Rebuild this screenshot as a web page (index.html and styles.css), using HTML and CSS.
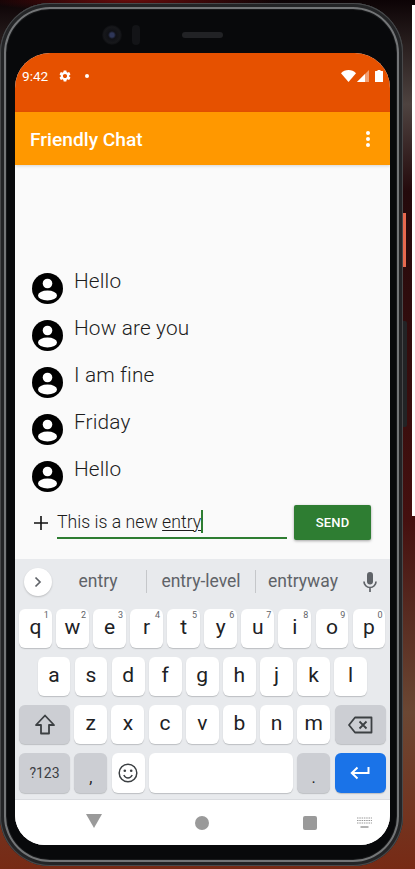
FILE: index.html
```html
<!DOCTYPE html>
<html lang="en">
<head>
  <meta charset="UTF-8">
  <title>Friendly Chat</title>
  <link rel="stylesheet" href="styles.css">
</head>
<body>

  <div class="window-edge"></div>

  <div class="phone">
    <span class="side-glow"></span>
    <span class="side-button"></span>

    <div class="bezel-top">
      <span class="camera"></span>
      <span class="sensor"></span>
      <span class="speaker"></span>
    </div>

    <div class="screen">
      <div class="status-bar">
        <span class="clock">9:42</span>
        <svg class="gear" viewBox="0 0 24 24"><path fill="#fff" d="M19.14 12.94c.04-.3.06-.61.06-.94 0-.32-.02-.64-.07-.94l2.03-1.58c.18-.14.23-.41.12-.61l-1.92-3.32c-.12-.22-.37-.29-.59-.22l-2.39.96c-.5-.38-1.03-.7-1.62-.94l-.36-2.54c-.04-.24-.24-.41-.48-.41h-3.84c-.24 0-.43.17-.47.41l-.36 2.54c-.59.24-1.13.57-1.62.94l-2.39-.96c-.22-.08-.47 0-.59.22L2.74 8.87c-.12.21-.08.47.12.61l2.03 1.58c-.05.3-.09.63-.09.94s.02.64.07.94l-2.03 1.58c-.18.14-.23.41-.12.61l1.92 3.32c.12.22.37.29.59.22l2.39-.96c.5.38 1.03.7 1.62.94l.36 2.54c.05.24.24.41.48.41h3.84c.24 0 .44-.17.47-.41l.36-2.54c.59-.24 1.13-.56 1.62-.94l2.39.96c.22.08.47 0 .59-.22l1.92-3.32c.12-.22.07-.47-.12-.61l-2.01-1.58zM12 15.6c-1.98 0-3.6-1.62-3.6-3.6s1.62-3.6 3.6-3.6 3.6 1.62 3.6 3.6-1.62 3.6-3.6 3.6z"/></svg>
        <span class="dot"></span>
        <span class="status-icons">
          <svg width="15" height="12" viewBox="0 0 15 12"><path fill="#fff" d="M0 3.2C2 1.2 4.6 0 7.5 0S13 1.200 15 3.200L7.500 12z"/></svg>
          <svg width="12" height="12" viewBox="0 0 12 12"><path fill="#fff" d="M12 0v12H0z" opacity=".45"/><path fill="#fff" d="M8 4v8H0z"/></svg>
          <svg class="battery" width="8" height="12" viewBox="0 0 8 12"><path fill="#fff" d="M2.500 0h3v1H7.500a.5.5 0 0 1 .5.5V12H0V1.500A.5.5 0 0 1 .5 1h2z"/></svg>
        </span>
      </div>

      <div class="app-bar">
        <h1>Friendly Chat</h1>
        <div class="more"><span></span><span></span><span></span></div>
      </div>

      <div class="chat">
        <div class="messages">
          <div class="message">
            <svg class="avatar" viewBox="0 0 31 31"><circle cx="15.5" cy="15.500" r="15.500"/><circle cx="15.500" cy="10.500" r="4.800" fill="#fff"/><ellipse cx="15.500" cy="22.500" rx="9.500" ry="5" fill="#fff"/></svg>
            <p>Hello</p>
          </div>
          <div class="message">
            <svg class="avatar" viewBox="0 0 31 31"><circle cx="15.5" cy="15.500" r="15.500"/><circle cx="15.500" cy="10.500" r="4.800" fill="#fff"/><ellipse cx="15.500" cy="22.500" rx="9.500" ry="5" fill="#fff"/></svg>
            <p>How are you</p>
          </div>
          <div class="message">
            <svg class="avatar" viewBox="0 0 31 31"><circle cx="15.5" cy="15.500" r="15.500"/><circle cx="15.500" cy="10.500" r="4.800" fill="#fff"/><ellipse cx="15.500" cy="22.500" rx="9.500" ry="5" fill="#fff"/></svg>
            <p>I am fine</p>
          </div>
          <div class="message">
            <svg class="avatar" viewBox="0 0 31 31"><circle cx="15.5" cy="15.500" r="15.500"/><circle cx="15.500" cy="10.500" r="4.800" fill="#fff"/><ellipse cx="15.500" cy="22.500" rx="9.500" ry="5" fill="#fff"/></svg>
            <p>Friday</p>
          </div>
          <div class="message">
            <svg class="avatar" viewBox="0 0 31 31"><circle cx="15.5" cy="15.500" r="15.500"/><circle cx="15.500" cy="10.500" r="4.800" fill="#fff"/><ellipse cx="15.500" cy="22.500" rx="9.500" ry="5" fill="#fff"/></svg>
            <p>Hello</p>
          </div>
        </div>

        <div class="composer">
          <svg class="plus" width="14" height="14" viewBox="0 0 14 14"><path d="M7 0v14M0 7h14" stroke="#111" stroke-width="1.600"/></svg>
          <div class="input">This is a new <u>entry</u><span class="caret"></span></div>
          <button class="send">SEND</button>
        </div>
      </div>

      <div class="keyboard">
        <div class="suggestions">
          <span class="expand"><svg width="8" height="12" viewBox="0 0 8 12"><path d="M1.500 1.500L6 6l-4.500 4.500" fill="none" stroke="#5f6368" stroke-width="1.700"/></svg></span>
          <span class="word word-a">entry</span>
          <span class="word word-b">entry-level</span>
          <span class="word word-c">entryway</span>
          <svg class="mic" width="14" height="20" viewBox="0 0 14 20"><path fill="#5f6368" d="M7 12.500a3 3 0 0 0 3-3V3a3 3 0 0 0-6 0v6.500a3 3 0 0 0 3 3z"/><path fill="none" stroke="#5f6368" stroke-width="1.700" d="M1 9.500a6 6 0 0 0 12 0M7 15.500V20"/></svg>
        </div>

        <div class="key-row">
          <span class="key">q<sup>1</sup></span>
          <span class="key">w<sup>2</sup></span>
          <span class="key">e<sup>3</sup></span>
          <span class="key">r<sup>4</sup></span>
          <span class="key">t<sup>5</sup></span>
          <span class="key">y<sup>6</sup></span>
          <span class="key">u<sup>7</sup></span>
          <span class="key">i<sup>8</sup></span>
          <span class="key">o<sup>9</sup></span>
          <span class="key">p<sup>0</sup></span>
        </div>
        <div class="key-row row-home">
          <span class="key">a</span>
          <span class="key">s</span>
          <span class="key">d</span>
          <span class="key">f</span>
          <span class="key">g</span>
          <span class="key">h</span>
          <span class="key">j</span>
          <span class="key">k</span>
          <span class="key">l</span>
        </div>
        <div class="key-row">
          <span class="key key-wide key-dark">
            <svg width="22" height="21" viewBox="0 0 22 21"><path d="M11 1.500L20 11h-5v8.500H7V11H2z" fill="none" stroke="#3c4043" stroke-width="1.800" stroke-linejoin="round"/></svg>
          </span>
          <span class="key">z</span>
          <span class="key">x</span>
          <span class="key">c</span>
          <span class="key">v</span>
          <span class="key">b</span>
          <span class="key">n</span>
          <span class="key">m</span>
          <span class="key key-wide key-dark">
            <svg width="25" height="18" viewBox="0 0 25 18"><path d="M7 1.500h16.500v15H7L1 9z" fill="none" stroke="#3c4043" stroke-width="1.800" stroke-linejoin="round"/><path d="M11.500 5.500l7 7M18.500 5.500l-7 7" stroke="#3c4043" stroke-width="1.800"/></svg>
          </span>
        </div>
        <div class="key-row row-bottom">
          <span class="key key-wide key-dark key-small">?123</span>
          <span class="key key-dark key-mark">,</span>
          <span class="key">
            <svg width="20" height="20" viewBox="0 0 20 20"><circle cx="10" cy="10" r="8.800" fill="none" stroke="#3c4043" stroke-width="1.500"/><circle cx="6.800" cy="7.800" r="1.300" fill="#3c4043"/><circle cx="13.200" cy="7.800" r="1.300" fill="#3c4043"/><path d="M5.800 12c1 2 2.400 3 4.200 3s3.200-1 4.200-3" fill="none" stroke="#3c4043" stroke-width="1.500"/></svg>
          </span>
          <span class="key key-space"></span>
          <span class="key key-dark key-mark">.</span>
          <span class="key key-wide key-enter">
            <svg width="20" height="14" viewBox="0 0 20 14"><path d="M18.500 1v6H2.500M7.500 1.500L1.800 7l5.700 5.500" fill="none" stroke="#fff" stroke-width="2"/></svg>
          </span>
        </div>
      </div>

      <div class="nav-bar">
        <span class="nav-back"></span>
        <span class="nav-home"></span>
        <span class="nav-recent"></span>
        <svg class="nav-kbd" width="15" height="12" viewBox="0 0 15 12"><path d="M0 1h15M0 3.500h15M0 6h15" stroke="#9a9a9a" stroke-width="1.200" stroke-dasharray="1.500 .8"/><path d="M3.500 10h8" stroke="#9a9a9a" stroke-width="1.500"/></svg>
      </div>
    </div>
  </div>

</body>
</html>
```

FILE: styles.css
```css
* { box-sizing: border-box; }
html, body { height: 100%; }
body {
  margin: 0;
  height: 869px;
  overflow: hidden;
  font-family: Roboto, sans-serif;
  background:
    radial-gradient(ellipse 150px 12px at 130px 0, #6a0c0c, transparent),
    linear-gradient(180deg, #0c0305 0%, #4e4340 12%, #240a0c 22%, #45100f 60%, #6b4733 82%, #772a15 100%);
}

.window-edge { position: absolute; top: 5px; left: 412px; width: 3px; height: 511px; background: #fff; }

/* phone body */
.phone {
  position: relative;
  width: 403px;
  height: 863px;
  margin-top: 3px;
  padding: 0 13px 21px 15px;
  border-radius: 50px;
  background: #08090b;
  box-shadow: inset 0 0 0 1px #48494b, inset 0 0 0 4px #232426, inset 0 0 0 6px #737577, inset 0 0 0 7px #17181a;
}
.side-glow { position: absolute; left: 403px; top: 210px; width: 3px; height: 54px; background: #e8694f; }
.side-button { position: absolute; left: 403px; top: 318px; width: 4px; height: 106px; border-radius: 0 2px 2px 0; background: #222325; }

.bezel-top { display: flex; align-items: center; height: 50px; padding: 13px 0 0 87px; }
.camera {
  width: 20px; height: 20px; border-radius: 50%;
  background: radial-gradient(circle, #2e3658 0 2px, #101116 4px, #17181b 8px, #0c0d10 10px);
}
.sensor { width: 8px; height: 20px; margin-left: 10px; border-radius: 4px; background: #131417; }
.speaker { width: 41px; height: 6px; margin-left: 42px; border-radius: 3px; background: #212225; }

/* screen */
.screen { width: 375px; height: 792px; border-radius: 35px 35px 30px 30px; overflow: hidden; background: #fafafa; }

.status-bar { display: flex; align-items: center; height: 59px; padding: 0 7px 13px 7px; background: #e65100; color: #fff; }
.clock { font-size: 13.600px; font-weight: 400; }
.gear { width: 14px; height: 14px; margin-left: 10px; }
.dot { width: 4px; height: 4px; margin-left: 13px; border-radius: 50%; background: #fff; }
.status-icons { display: flex; align-items: center; gap: 1px; margin-left: auto; }
.battery { margin-left: 5px; }

.app-bar { display: flex; align-items: center; justify-content: space-between; height: 53px; padding: 0 20px 0 15px; background: #ff9800; box-shadow: 0 1px 3px rgba(0,0,0,.15); position: relative; }
.app-bar h1 { margin: 2px 0 0; font-size: 19.200px; font-weight: 500; color: #fff; }
.more { display: flex; flex-direction: column; gap: 2px; margin-top: 1px; }
.more span { width: 4px; height: 4px; border-radius: 50%; background: #fff; }

.chat { display: flex; flex-direction: column; justify-content: flex-end; height: 394px; padding: 0 19px 19px 17px; }
.messages { display: flex; flex-direction: column; gap: 16px; }
.message { display: flex; gap: 11px; height: 31px; }
.avatar { width: 31px; height: 31px; flex: none; }
.message p { margin: -6px 0 0; font-size: 20.800px; line-height: 28px; font-weight: 300; letter-spacing: .15px; color: #1c1c1c; }

.composer { display: flex; align-items: center; gap: 7px; height: 35px; margin-top: 13px; }
.plus { flex: none; margin-left: 2px; }
.input {
  width: 230px; height: 31px; margin-left: 2px; margin-top: 2px;
  border-bottom: 2px solid #2e7d32;
  font-size: 17.700px; line-height: 28px; font-weight: 300; color: #1c1c1c;
}
.input u { text-decoration-thickness: 1px; text-underline-offset: 2px; }
.caret { display: inline-block; width: 2px; height: 23px; vertical-align: -5px; background: #2e7d32; }
.send {
  width: 77px; height: 35px; border: none; border-radius: 2px;
  background: #2e7d32; color: #fff;
  font: 500 13px Roboto, sans-serif; letter-spacing: .2px;
  box-shadow: 0 1px 3px rgba(0,0,0,.35);
}

/* keyboard */
.keyboard { height: 241px; padding: 0 4.500px 0 4px; background: #e8eaed; border-bottom: 1px solid #dadce0; }
.suggestions { position: relative; display: flex; align-items: center; height: 50px; padding: 0 0 5px 5px; color: #5f6368; font-size: 17.500px; }
.expand { display: flex; align-items: center; justify-content: center; width: 28px; height: 28px; border-radius: 50%; background: #fff; box-shadow: 0 1px 2px rgba(0,0,0,.2); }
.word { display: block; height: 23px; line-height: 23px; text-align: center; }
.word-a { width: 95px; padding-right: 2px; border-right: 1px solid #c5c7ca; }
.word-b { width: 109px; border-right: 1px solid #c5c7ca; }
.word-c { width: 94px; }
.mic { margin-left: 13px; }

.key-row { display: flex; gap: 4.200px; height: 39px; margin-bottom: 9px; }
.row-home { padding: 0 18.500px; }
.row-bottom { height: 40px; margin-bottom: 0; }
.key {
  position: relative; flex: 1 1 0;
  display: flex; align-items: center; justify-content: center;
  padding-bottom: 4px;
  border-radius: 6px; background: #fff; box-shadow: 0 1px 1px rgba(60,64,67,.25);
  font-size: 21px; color: #202124;
}
.key svg { margin-top: 4px; }
.key sup { position: absolute; top: 1px; right: 3px; font-size: 9px; line-height: 10px; color: #5f6368; }
.key-wide { flex: 0 0 51px; }
.key-dark { background: #ccced3; }
.key-small { padding-bottom: 0; font-size: 14px; color: #3c4043; }
.key-mark { align-items: flex-end; padding-bottom: 7px; font-size: 16px; line-height: 16px; }
.key-space { flex: 0 0 144px; }
.key-enter { background: #1a73e8; }

.nav-bar { position: relative; display: flex; align-items: center; height: 45px; background: #fff; }
.nav-back { width: 0; height: 0; margin: 0 0 3px 71px; border-style: solid; border-width: 14px 8px 0; border-color: #9a9a9a transparent transparent; }
.nav-home { width: 14px; height: 14px; margin: 0 0 0 93px; border-radius: 50%; background: #9a9a9a; }
.nav-recent { width: 14px; height: 14px; margin: 0 0 0 94px; border-radius: 2px; background: #9a9a9a; }
.nav-kbd { margin-left: 40px; }
```
